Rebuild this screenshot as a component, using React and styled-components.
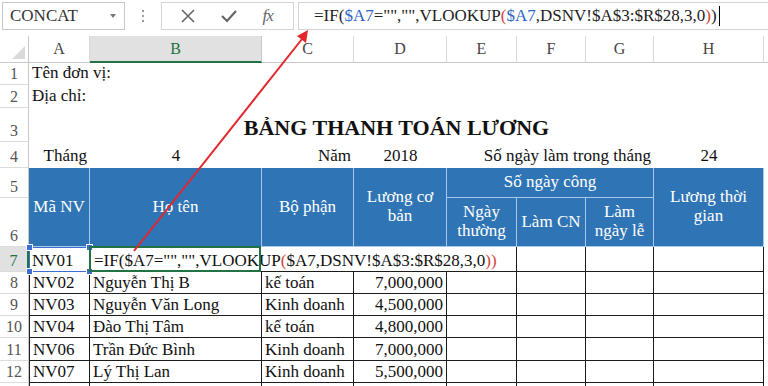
import React from "react";
import styled, { createGlobalStyle, css } from "styled-components";

const GlobalStyle = createGlobalStyle`
  html, body {
    margin: 0;
    padding: 0;
    background: #fff;
    overflow: hidden;
  }
  body {
    font-family: "Liberation Serif", "Times New Roman", serif;
  }
`;

const serif = `"Liberation Serif", "Times New Roman", serif`;
const GREEN = "#217346";

const Page = styled.div`
  position: relative;
  width: 768px;
  height: 386px;
  overflow: hidden;
  background: #fff;
`;

/* ---------- formula bar ---------- */

const FormulaBar = styled.div`
  display: flex;
  align-items: flex-start;
  height: 36px;
  padding: 2px 0 0 2px;
  box-sizing: border-box;
`;

const NameBox = styled.div`
  width: 123px;
  height: 28px;
  box-sizing: border-box;
  border: 1px solid #c8c8c8;
  display: flex;
  align-items: center;
  justify-content: space-between;
  padding: 0 8px 0 7px;
  font-family: ${serif};
  font-size: 17px;
  color: #333;
`;

const DropArrow = styled.span`
  width: 0;
  height: 0;
  border-left: 3px solid transparent;
  border-right: 3px solid transparent;
  border-top: 4px solid #777;
`;

const Dots = styled.div`
  width: 36px;
  height: 28px;
  display: flex;
  flex-direction: column;
  align-items: center;
  justify-content: center;
  gap: 3px;

  span {
    width: 2px;
    height: 2px;
    background: #999;
  }
`;

const ButtonGroup = styled.div`
  width: 133px;
  height: 28px;
  box-sizing: border-box;
  border: 1px solid #d4d4d4;
  display: flex;
  align-items: center;
  justify-content: space-around;
  padding: 0 8px 0 6px;
`;

const Fx = styled.span`
  font-family: ${serif};
  font-style: italic;
  font-size: 17px;
  color: #666;
  letter-spacing: -1px;
`;

const FormulaInput = styled.div`
  flex: 1;
  margin-left: 4px;
  height: 28px;
  box-sizing: border-box;
  border: 1px solid #d4d4d4;
  border-right: none;
  display: flex;
  align-items: center;
  padding-left: 15px;
  font-family: ${serif};
  font-size: 17px;
  color: #222;
  white-space: nowrap;
`;

const Caret = styled.span`
  display: inline-block;
  width: 1px;
  height: 20px;
  background: #000;
  margin-left: 2px;
`;

const Ref = styled.span`
  color: #2f63c4;
`;

const Paren = styled.span`
  color: #d0453e;
`;

/* ---------- sheet grid ---------- */

const Sheet = styled.div`
  display: grid;
  grid-template-columns: 29px 61px 172px 92px 93px 70px 69px 68px 110px 30px;
  grid-template-rows: 27px 22px 23px 34px 26px 30px 49px 25px 22px 22px 22px 23px 22px 22px;
`;

const place = css`
  grid-column: ${(p) => p.$c} / span ${(p) => p.$w || 1};
  grid-row: ${(p) => p.$r} / span ${(p) => p.$h || 1};
  box-sizing: border-box;
  min-width: 0;
`;

const Corner = styled.div`
  ${place};
  position: relative;
  border-right: 1px solid #c8c8c8;
  border-bottom: 1px solid #c8c8c8;

  &::after {
    content: "";
    position: absolute;
    right: 3px;
    bottom: 3px;
    width: 0;
    height: 0;
    border-left: 13px solid transparent;
    border-bottom: 13px solid #dadada;
  }
`;

const ColHead = styled.div`
  ${place};
  display: flex;
  align-items: center;
  justify-content: center;
  font-family: ${serif};
  font-size: 16px;
  color: #444;
  border-right: 1px solid #d8d8d8;
  border-bottom: 1px solid #c8c8c8;
  background: #fff;

  ${(p) =>
    p.$selected &&
    css`
      background: #e1e1e1;
      color: ${GREEN};
      border-bottom: 2px solid ${GREEN};
      border-right-color: #c8c8c8;
    `}
`;

const RowHead = styled.div`
  ${place};
  display: flex;
  align-items: flex-end;
  justify-content: center;
  padding-bottom: 1px;
  font-family: ${serif};
  font-size: 16px;
  color: #555;
  border-right: 1px solid #c8c8c8;
  border-bottom: 1px solid #dcdcdc;

  ${(p) =>
    p.$selected &&
    css`
      background: #e1e1e1;
      color: ${GREEN};
      border-right: 2px solid ${GREEN};
    `}
`;

const TextCell = styled.div`
  ${place};
  display: flex;
  align-items: flex-end;
  justify-content: ${(p) => p.$align || "flex-start"};
  padding: 0 3px 2px;
  white-space: nowrap;
  overflow: visible;
  font-family: ${serif};
  font-size: ${(p) => (p.$title ? "22px" : "17px")};
  font-weight: ${(p) => (p.$title ? 700 : 400)};
  color: #111;
  line-height: 1.15;
`;

const HeadCell = styled.div`
  ${place};
  display: flex;
  align-items: center;
  justify-content: center;
  text-align: center;
  background: #2f75b5;
  color: #fff;
  font-family: ${serif};
  font-size: 17px;
  line-height: 1.1;
  border-right: 1px solid #a9c9ea;
  border-bottom: 1px solid #a9c9ea;
  padding: 0 3px;
`;

const DataCell = styled.div`
  ${place};
  display: flex;
  align-items: flex-end;
  justify-content: ${(p) => p.$align || "flex-start"};
  padding: 0 3px 1px;
  font-family: ${serif};
  font-size: 17px;
  line-height: 19px;
  color: #111;
  white-space: nowrap;
  border-right: 1px solid #1c1c1c;
  border-bottom: 1px solid #1c1c1c;
  ${(p) => p.$first && css`border-left: 1px solid #1c1c1c;`}
`;

const RefCell = styled(DataCell)`
  position: relative;
  border: 1px solid #3c6fd1;
  padding-left: 2px;
`;

const Handle = styled.span`
  position: absolute;
  width: 5px;
  height: 5px;
  background: #3c6fd1;
  border: 1px solid #fff;
  ${(p) => (p.$top ? "top: -4px;" : "bottom: -4px;")}
  ${(p) => (p.$left ? "left: -4px;" : "right: -4px;")}
`;

const EditCell = styled(DataCell)`
  position: relative;
  padding-left: 4px;
  z-index: 1;

  &::after {
    content: "";
    position: absolute;
    left: -1px;
    top: -1px;
    width: 172px;
    bottom: -1px;
    border: 2px solid ${GREEN};
    box-sizing: border-box;
  }
`;

const ArrowLayer = styled.svg`
  position: absolute;
  left: 0;
  top: 0;
  width: 768px;
  height: 386px;
  pointer-events: none;
  z-index: 5;
`;

const columns = ["A", "B", "C", "D", "E", "F", "G", "H", ""];

const rowsData = [
  ["NV02", "Nguyễn Thị B", "kế toán", "7,000,000"],
  ["NV03", "Nguyễn Văn Long", "Kinh doanh", "4,500,000"],
  ["NV04", "Đào Thị Tâm", "kế toán", "4,800,000"],
  ["NV06", "Trần Đức Bình", "Kinh doanh", "7,000,000"],
  ["NV07", "Lý Thị Lan", "Kinh doanh", "5,500,000"],
  ["", "", "", ""],
];

const Formula = ({ colored }) => (
  <>
    =IF({colored ? <Ref>$A7</Ref> : "$A7"}="","",VLOOKUP<Paren>(</Paren>
    {colored ? <Ref>$A7</Ref> : "$A7"},DSNV!$A$3:$R$28,3,0<Paren>)</Paren>
    {colored ? ")" : <Paren>)</Paren>}
  </>
);

const App = () => {
  return (
    <Page>
      <GlobalStyle />
      <FormulaBar>
        <NameBox>
          CONCAT
          <DropArrow />
        </NameBox>
        <Dots>
          <span />
          <span />
          <span />
        </Dots>
        <ButtonGroup>
          <svg width="16" height="16" viewBox="0 0 16 16">
            <path d="M2 2 L14 14 M14 2 L2 14" stroke="#666" strokeWidth="1.6" fill="none" />
          </svg>
          <svg width="18" height="16" viewBox="0 0 18 16">
            <path d="M2 8 L7 13 L16 3" stroke="#666" strokeWidth="2.2" fill="none" />
          </svg>
          <Fx>fx</Fx>
        </ButtonGroup>
        <FormulaInput>
          <Formula colored />
          <Caret />
        </FormulaInput>
      </FormulaBar>

      <Sheet>
        <Corner $c={1} $r={1} />
        {columns.map((col, i) => (
          <ColHead key={i} $c={i + 2} $r={1} $selected={col === "B"}>
            {col}
          </ColHead>
        ))}

        {Array.from({ length: 13 }, (_, i) => (
          <RowHead key={i} $c={1} $r={i + 2} $selected={i + 1 === 7}>
            {i < 12 ? i + 1 : ""}
          </RowHead>
        ))}

        <TextCell $c={2} $r={2} $w={3}>Tên đơn vị:</TextCell>
        <TextCell $c={2} $r={3} $w={3}>Địa chỉ:</TextCell>
        <TextCell $c={2} $r={4} $w={8} $align="center" $title>
          BẢNG THANH TOÁN LƯƠNG
        </TextCell>
        <TextCell $c={2} $r={5} $align="flex-end">Tháng</TextCell>
        <TextCell $c={3} $r={5} $align="center">4</TextCell>
        <TextCell $c={4} $r={5} $align="flex-end">Năm</TextCell>
        <TextCell $c={5} $r={5} $align="center">2018</TextCell>
        <TextCell $c={6} $r={5} $w={3} $align="flex-end">Số ngày làm trong tháng</TextCell>
        <TextCell $c={9} $r={5} $align="center">24</TextCell>

        <HeadCell $c={2} $r={6} $h={2}>Mã NV</HeadCell>
        <HeadCell $c={3} $r={6} $h={2}>Họ tên</HeadCell>
        <HeadCell $c={4} $r={6} $h={2}>Bộ phận</HeadCell>
        <HeadCell $c={5} $r={6} $h={2}>Lương cơ<br />bản</HeadCell>
        <HeadCell $c={6} $r={6} $w={3}>Số ngày công</HeadCell>
        <HeadCell $c={6} $r={7}>Ngày<br />thường</HeadCell>
        <HeadCell $c={7} $r={7}>Làm CN</HeadCell>
        <HeadCell $c={8} $r={7}>Làm<br />ngày lễ</HeadCell>
        <HeadCell $c={9} $r={6} $h={2}>Lương thời<br />gian</HeadCell>

        <RefCell $c={2} $r={8}>
          NV01
          <Handle $top $left />
          <Handle $top />
          <Handle $left />
          <Handle />
        </RefCell>
        <EditCell $c={3} $r={8} $w={4}>
          <Formula />
        </EditCell>
        <DataCell $c={7} $r={8} />
        <DataCell $c={8} $r={8} />
        <DataCell $c={9} $r={8} />

        {rowsData.map((row, ri) =>
          [...row, "", "", "", ""].map((val, ci) => (
            <DataCell
              key={`${ri}-${ci}`}
              $c={ci + 2}
              $r={ri + 9}
              $first={ci === 0}
              $align={ci === 3 ? "flex-end" : "flex-start"}
            >
              {val}
            </DataCell>
          ))
        )}
      </Sheet>

      <ArrowLayer viewBox="0 0 768 386">
        <line x1="134" y1="251" x2="302" y2="39" stroke="#e3262c" strokeWidth="2" />
        <polygon points="308,30 297,36 306,43" fill="#e3262c" />
      </ArrowLayer>
    </Page>
  );
};

export default App;
